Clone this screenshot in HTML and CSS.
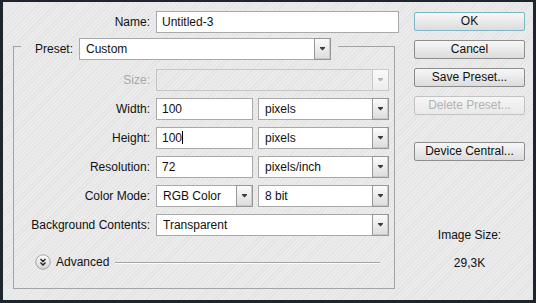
FILE: index.html
```html
<!DOCTYPE html>
<html lang="en">

<head>
    <meta charset="UTF-8">
    <title>New</title>
    <link rel="stylesheet" href="styles.css">
</head>

<body>
    <div class="frame">
        <div class="main">
            <div class="row name-row">
                <label class="lbl">Name:</label>
                <div class="field name-field">Untitled-3</div>
            </div>

            <fieldset class="group">
                <legend class="legend">
                    <span class="lbl">Preset:</span>
                    <div class="select preset-select">
                        <span class="val">Custom</span>
                        <span class="arrow"><svg width="5" height="4" viewBox="0 0 5 4"><path d="M0 0h5v1L2.5 3.5L0 1z" /></svg></span>
                    </div>
                </legend>

                <div class="grid">
                    <label class="lbl disabled">Size:</label>
                    <div class="select disabled">
                        <span class="val"></span>
                        <span class="arrow"><svg width="5" height="4" viewBox="0 0 5 4"><path d="M0 0h5v1L2.5 3.5L0 1z" /></svg></span>
                    </div>

                    <label class="lbl">Width:</label>
                    <div class="pair">
                        <div class="field num">100</div>
                        <div class="select unit">
                            <span class="val">pixels</span>
                            <span class="arrow"><svg width="5" height="4" viewBox="0 0 5 4"><path d="M0 0h5v1L2.5 3.5L0 1z" /></svg></span>
                        </div>
                    </div>

                    <label class="lbl">Height:</label>
                    <div class="pair">
                        <div class="field num">100<span class="caret"></span></div>
                        <div class="select unit">
                            <span class="val">pixels</span>
                            <span class="arrow"><svg width="5" height="4" viewBox="0 0 5 4"><path d="M0 0h5v1L2.5 3.5L0 1z" /></svg></span>
                        </div>
                    </div>

                    <label class="lbl">Resolution:</label>
                    <div class="pair">
                        <div class="field num">72</div>
                        <div class="select unit">
                            <span class="val">pixels/inch</span>
                            <span class="arrow"><svg width="5" height="4" viewBox="0 0 5 4"><path d="M0 0h5v1L2.5 3.5L0 1z" /></svg></span>
                        </div>
                    </div>

                    <label class="lbl">Color Mode:</label>
                    <div class="pair">
                        <div class="select mode">
                            <span class="val">RGB Color</span>
                            <span class="arrow"><svg width="5" height="4" viewBox="0 0 5 4"><path d="M0 0h5v1L2.5 3.5L0 1z" /></svg></span>
                        </div>
                        <div class="select unit">
                            <span class="val">8 bit</span>
                            <span class="arrow"><svg width="5" height="4" viewBox="0 0 5 4"><path d="M0 0h5v1L2.5 3.5L0 1z" /></svg></span>
                        </div>
                    </div>

                    <label class="lbl">Background Contents:</label>
                    <div class="select">
                        <span class="val">Transparent</span>
                        <span class="arrow"><svg width="5" height="4" viewBox="0 0 5 4"><path d="M0 0h5v1L2.5 3.5L0 1z" /></svg></span>
                    </div>
                </div>

                <div class="advanced">
                    <svg class="adv-icon" width="16" height="16" viewBox="0 0 16 16">
                        <defs>
                            <linearGradient id="ball" x1="0" y1="0" x2="0" y2="1">
                                <stop offset="0" stop-color="#ffffff" />
                                <stop offset="1" stop-color="#d4d4d4" />
                            </linearGradient>
                        </defs>
                        <circle cx="8" cy="8" r="7.2" fill="url(#ball)" stroke="#a2a2a2" />
                        <path d="M5.5 5l2.5 2.5L10.5 5M5.5 8.5L8 11l2.5-2.5" fill="none" stroke="#222" stroke-width="1.4" />
                    </svg>
                    <span class="adv-text">Advanced</span>
                    <span class="adv-line"></span>
                </div>
            </fieldset>
        </div>

        <div class="side">
            <div class="btn default">OK</div>
            <div class="btn">Cancel</div>
            <div class="btn">Save Preset...</div>
            <div class="btn off">Delete Preset...</div>
            <div class="btn central">Device Central...</div>
            <p class="size-title">Image Size:</p>
            <p class="size-value">29,3K</p>
        </div>
    </div>
</body>

</html>
```

FILE: styles.css
```css
html,
body {
    margin: 0;
    padding: 0;
}

body {
    font-family: "Liberation Sans", Arial, sans-serif;
    font-size: 12px;
    color: #111;
}

.frame {
    width: 536px;
    height: 303px;
    box-sizing: border-box;
    border-style: solid;
    border-color: #1f252c;
    border-width: 2px 3px 3px 3px;
    display: flex;
    background-color: #e8e8e8;
    background-image: repeating-linear-gradient(135deg, #ebebeb 0, #ebebeb 2px, #e3e3e3 2px, #e3e3e3 3px);
}

.main {
    width: 396px;
    padding-top: 9px;
}

.lbl {
    text-align: right;
    white-space: nowrap;
}

.lbl.disabled {
    color: #a8a8a8;
}

.row {
    display: flex;
    align-items: center;
}

.name-row .lbl {
    width: 147px;
    margin-right: 6px;
}

.field {
    height: 22px;
    box-sizing: border-box;
    border: 1px solid #a9a9a9;
    background: #fff;
    padding: 0 5px;
    line-height: 20px;
    white-space: nowrap;
}

.name-field {
    width: 243px;
}

.caret {
    display: inline-block;
    width: 1px;
    height: 13px;
    background: #000;
    vertical-align: -2px;
}

/* group box with the preset picker in its legend */
.group {
    margin: 0 0 0 10px;
    padding: 0;
    width: 382px;
    height: 256px;
    box-sizing: border-box;
    border: 1px solid #a4a4a4;
    min-width: 0;
}

.legend {
    margin-left: 7px;
    padding: 5px 7px 0 14px;
    display: flex;
    align-items: center;
}

.legend .lbl {
    margin-right: 6px;
}

.select {
    height: 22px;
    box-sizing: border-box;
    border: 1px solid #a9a9a9;
    background: #fff;
    display: flex;
    white-space: nowrap;
}

.select .val {
    flex: 1;
    padding-left: 6px;
    line-height: 20px;
    overflow: hidden;
}

.select .arrow {
    width: 15px;
    margin: -1px -1px -1px 0;
    border: 1px solid #979797;
    background: linear-gradient(#fbfbfb, #dcdcdc);
    box-shadow: inset -1px -1px 0 #c9c9c9;
    display: flex;
    align-items: center;
    justify-content: center;
}

.select .arrow svg {
    fill: #3c3c3c;
}

.select.disabled {
    background: transparent;
    border-color: #c6c6c6;
}

.select.disabled .arrow {
    border-color: #c9c9c9;
    background: linear-gradient(#fafafa, #ececec);
    box-shadow: none;
}

.select.disabled .arrow svg {
    fill: #b4b4b4;
}

.preset-select {
    width: 252px;
}

.grid {
    display: grid;
    grid-template-columns: 136px 1fr;
    grid-auto-rows: 22px;
    column-gap: 6px;
    row-gap: 7px;
    align-items: center;
    padding: 9px 5px 0 0;
}

.pair {
    display: flex;
    gap: 5px;
}

.num {
    width: 97px;
}

.unit {
    flex: 1;
}

.mode {
    width: 97px;
}

.advanced {
    display: flex;
    align-items: center;
    margin-top: 18px;
    padding: 0 14px 0 21px;
}

.adv-icon {
    flex: none;
}

.adv-text {
    margin-left: 5px;
}

.adv-line {
    flex: 1;
    height: 1px;
    margin-left: 6px;
    background: #a4a4a4;
    box-shadow: 0 1px 0 #fbfbfb;
}

/* right column buttons */
.side {
    width: 111px;
    padding: 10px 0 0 15px;
    display: flex;
    flex-direction: column;
    gap: 9px;
}

.btn {
    height: 19px;
    box-sizing: border-box;
    border: 1px solid #8d8d8d;
    border-radius: 2px;
    background: linear-gradient(#f7f7f7, #dcdcdc);
    text-align: center;
    line-height: 17px;
    white-space: nowrap;
}

.btn.default {
    border-color: #7cb7c6;
}

.btn.off {
    color: #b2b2b2;
    border-color: #c3c3c3;
    background: linear-gradient(#f6f6f6, #e9e9e9);
}

.btn.central {
    margin-top: 18px;
}

.size-title,
.size-value {
    margin: 0;
    text-align: center;
}

.size-title {
    margin-top: 58px;
}

.size-value {
    margin-top: 5px;
}
```
